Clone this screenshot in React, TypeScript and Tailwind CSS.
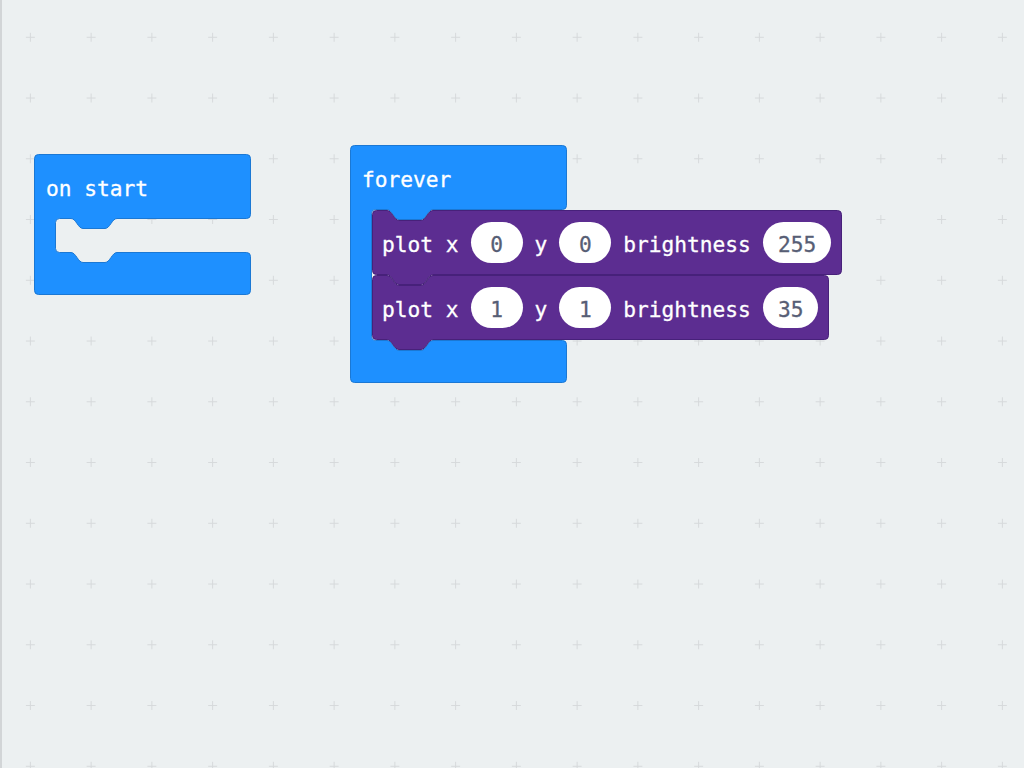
import { useLayoutEffect, useRef, useState, type ReactNode } from "react";

const BLUE = "#1e90ff";
const BLUE_EDGE = "#1b78d4";
const PURPLE = "#5c2d91";
const PURPLE_EDGE = "#47217a";

// measure the rendered box so the block outline follows the text
function useBox<T extends HTMLElement>() {
  const ref = useRef<T>(null);
  const [box, setBox] = useState({ w: 0, h: 0 });
  useLayoutEffect(() => {
    if (ref.current) setBox({ w: ref.current.offsetWidth, h: ref.current.offsetHeight });
  }, []);
  return [ref, box] as const;
}

function stmtPath(w: number, h: number) {
  const r = 4, L = 0.5, R = w - 0.5, T = 0.5, B = h - 0.5;
  return `M ${L + r} ${T} H 15 C 20 ${T} 22 ${T + 10} 27 ${T + 10} H 49 C 54 ${T + 10} 56 ${T} 61 ${T} H ${R - r} Q ${R} ${T} ${R} ${T + r} V ${B - r} Q ${R} ${B} ${R - r} ${B} H 61 C 56 ${B} 54 ${B + 10} 49 ${B + 10} H 27 C 22 ${B + 10} 20 ${B} 15 ${B} H ${L + r} Q ${L} ${B} ${L} ${B - r} V ${T + r} Q ${L} ${T} ${L + r} ${T} Z`;
}

function cPath(w: number, h: number, topH: number, holeH: number) {
  const r = 4, L = 0.5, R = w - 0.5, T = 0.5, B = h - 0.5;
  const I = 22, Ie = I - 0.5;
  const a = topH - 0.5, b = topH + holeH + 0.5;
  return [
    `M ${L + r} ${T} H ${R - r} Q ${R} ${T} ${R} ${T + r} V ${a - r} Q ${R} ${a} ${R - r} ${a}`,
    `H ${I + 61} C ${I + 56} ${a} ${I + 54} ${a + 10} ${I + 49} ${a + 10} H ${I + 27} C ${I + 22} ${a + 10} ${I + 20} ${a} ${I + 15} ${a}`,
    `H ${Ie + r} Q ${Ie} ${a} ${Ie} ${a + r} V ${b - r} Q ${Ie} ${b} ${Ie + r} ${b}`,
    `H ${I + 15} C ${I + 20} ${b} ${I + 22} ${b + 10} ${I + 27} ${b + 10} H ${I + 49} C ${I + 54} ${b + 10} ${I + 56} ${b} ${I + 61} ${b}`,
    `H ${R - r} Q ${R} ${b} ${R} ${b + r} V ${B - r} Q ${R} ${B} ${R - r} ${B} H ${L + r} Q ${L} ${B} ${L} ${B - r} V ${T + r} Q ${L} ${T} ${L + r} ${T} Z`,
  ].join(" ");
}

function Pill({ children }: { children: ReactNode }) {
  return (
    <span className="relative flex h-[41px] min-w-[52px] items-center justify-center rounded-full bg-white px-[15px] pt-[4px] text-[#575e75] [-webkit-text-stroke:0.3px_#575e75]">
      {children}
    </span>
  );
}

function Label({ children }: { children: ReactNode }) {
  return <span className="relative whitespace-pre pt-[4px] text-white [-webkit-text-stroke:0.3px_white]">{children}</span>;
}

function PlotBlock({ x, y, b }: { x: string; y: string; b: string }) {
  const [ref, box] = useBox<HTMLDivElement>();
  return (
    <div ref={ref} className="relative flex h-[65px] w-fit items-center gap-[12px] pl-[10px] pr-[11px]">
      <svg className="absolute left-0 top-0 overflow-visible" width={box.w} height={75}>
        <path d={stmtPath(box.w, 65)} fill={PURPLE} stroke={PURPLE_EDGE} strokeWidth={1} />
      </svg>
      <Label>plot x</Label>
      <Pill>{x}</Pill>
      <Label>y</Label>
      <Pill>{y}</Pill>
      <Label>brightness</Label>
      <Pill>{b}</Pill>
    </div>
  );
}

function LoopBlock({ label, children }: { label: string; children?: ReactNode }) {
  const [ref, box] = useBox<HTMLDivElement>();
  const holeH = box.h - 65 - 43;
  return (
    <div ref={ref} className="relative flex w-[217px] flex-col">
      <svg className="absolute left-0 top-0 overflow-visible" width={217} height={box.h}>
        {box.h > 0 && <path d={cPath(217, box.h, 65, holeH)} fill={BLUE} stroke={BLUE_EDGE} strokeWidth={1} />}
      </svg>
      <div className="relative flex h-[65px] items-center pl-[12px]">
        <Label>{label}</Label>
      </div>
      <div className="relative ml-[22px] flex min-h-[33px] flex-col">{children}</div>
      <div className="h-[43px]" />
    </div>
  );
}

export default function App() {
  return (
    <div className="relative h-[768px] w-[1024px] overflow-hidden bg-[#ecf0f1] font-['DejaVu_Sans_Mono',Menlo,monospace] text-[21.2px] leading-none">
      {/* workspace grid */}
      <svg className="absolute inset-0" width={1024} height={768}>
        <defs>
          <pattern id="grid" patternUnits="userSpaceOnUse" x={0} y={6.9} width={60.75} height={60.75}>
            <path d="M 25.9 30.4 H 34.9 M 30.4 25.9 V 34.9" stroke="#d6d9db" strokeWidth={1} />
          </pattern>
        </defs>
        <rect width={1024} height={768} fill="url(#grid)" />
      </svg>
      <div className="absolute left-0 top-0 h-full w-[2px] bg-[#d2d5d7]" />

      {/* blocks on the canvas */}
      <div className="absolute left-[34px] top-[154px]">
        <LoopBlock label="on start" />
      </div>
      <div className="absolute left-[350px] top-[145px]">
        <LoopBlock label="forever">
          <div className="relative z-[2]">
            <PlotBlock x="0" y="0" b="255" />
          </div>
          <div className="relative z-[1]">
            <PlotBlock x="1" y="1" b="35" />
          </div>
        </LoopBlock>
      </div>
    </div>
  );
}
